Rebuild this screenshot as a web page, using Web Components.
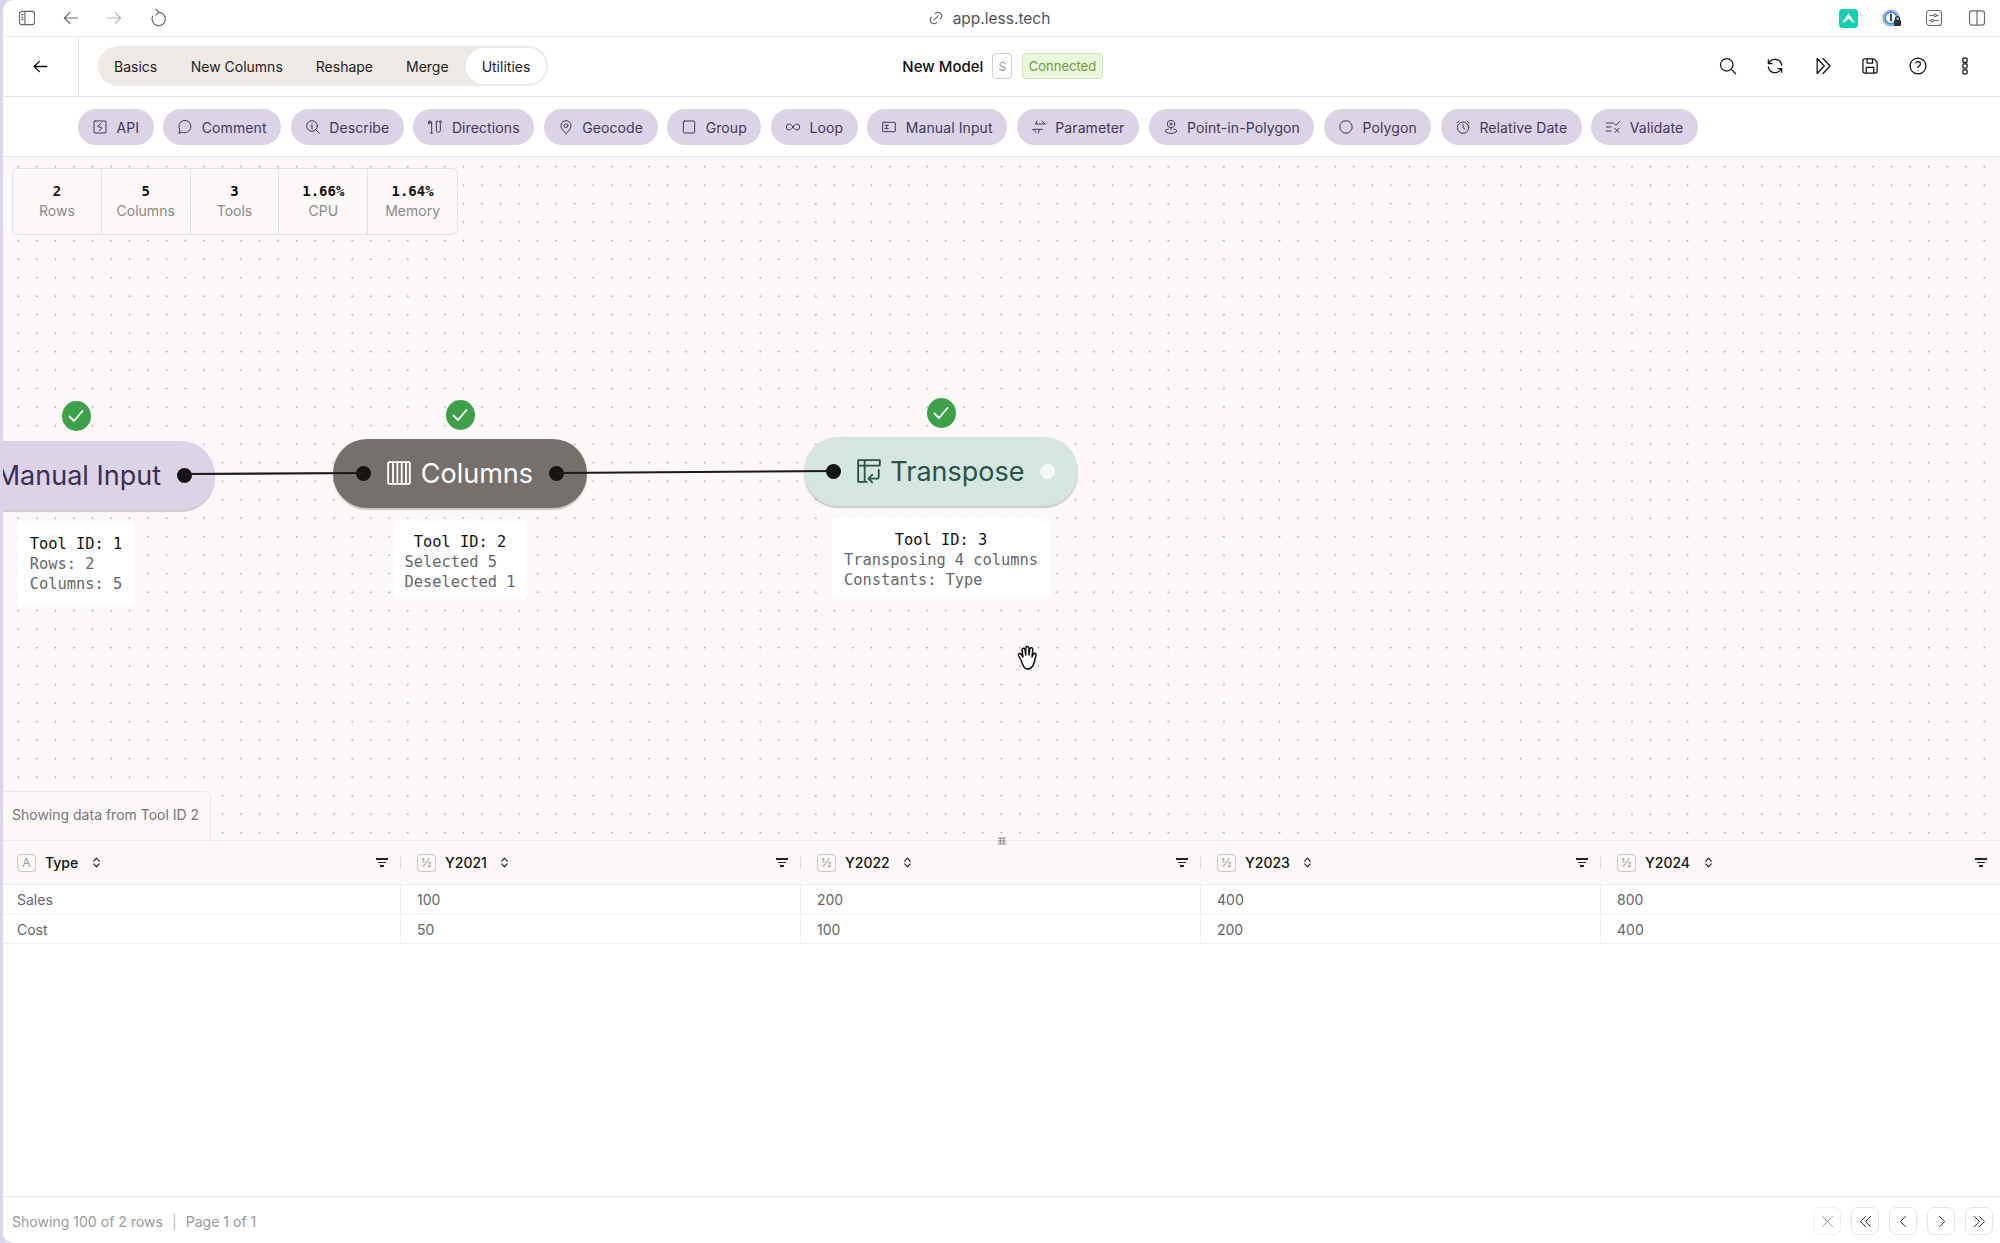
<!DOCTYPE html>
<html>
<head>
<meta charset="utf-8">
<title>New Model</title>
<style>
  html, body { margin: 0; height: 100%; background: #d9d5ea; }
  body { font-family: Inter, "Liberation Sans", sans-serif; overflow: hidden; }
  #app { display: flex; flex-direction: column; height: 1243px; margin-left: 3px; background: #fff; border-radius: 10px 0 0 10px; overflow: hidden; }
</style>
</head>
<body>
<div id="app">
  <browser-bar></browser-bar>
  <app-toolbar></app-toolbar>
  <tool-strip>
    <tool-chip icon="api">API</tool-chip>
    <tool-chip icon="comment">Comment</tool-chip>
    <tool-chip icon="describe">Describe</tool-chip>
    <tool-chip icon="directions">Directions</tool-chip>
    <tool-chip icon="geocode">Geocode</tool-chip>
    <tool-chip icon="group">Group</tool-chip>
    <tool-chip icon="loop">Loop</tool-chip>
    <tool-chip icon="manual">Manual Input</tool-chip>
    <tool-chip icon="parameter">Parameter</tool-chip>
    <tool-chip icon="pip">Point-in-Polygon</tool-chip>
    <tool-chip icon="polygon">Polygon</tool-chip>
    <tool-chip icon="alarm">Relative Date</tool-chip>
    <tool-chip icon="validate">Validate</tool-chip>
  </tool-strip>
  <flow-canvas>
    <stats-panel></stats-panel>
    <flow-node style="left:-66px;top:244px;width:278px;--pill-bg:#dbd3e6;--pill-fg:#3b2f52;--info-bottom:13px" label="Manual Input" icon="manual" out="black">
      <div>Tool ID: 1</div><div>Rows: 2</div><div>Columns: 5</div>
    </flow-node>
    <flow-node style="left:330px;top:243px;width:254px;--badge-gap:9px;--pill-bg:#75706c;--pill-fg:#fff" label="Columns" icon="columns" in="black" out="black">
      <div>Tool ID: 2</div><div>Selected 5</div><div>Deselected 1</div>
    </flow-node>
    <flow-node style="left:801px;top:241px;width:274px;--badge-gap:9px;--label-right:15.500px;--pill-bg:#d5e5df;--pill-fg:#2a5347" label="Transpose" icon="transpose" in="black" out="white">
      <div>Tool ID: 3</div><div>Transposing 4 columns</div><div>Constants: Type</div>
    </flow-node>
    <data-note>Showing data from Tool ID 2</data-note>
  </flow-canvas>
  <data-grid></data-grid>
  <grid-footer></grid-footer>
</div>

<script>
const ICONS = {
  sidebar: '<rect x="3" y="4" width="18" height="16" rx="3"/><path d="M9.5 4v16M5.5 8h1.5M5.5 11h1.5M5.5 14h1.5"/>',
  back: '<path d="M20 12H4M10.5 5.5 4 12l6.5 6.5"/>',
  forward: '<path d="M4 12h16M13.5 5.500 20 12l-6.500 6.500"/>',
  reload: '<path d="M12.500 5.200A8 8 0 1 1 5.500 10"/><path d="M9.500 1.500l3.500 3.700-3.500 3.300"/>',
  link: '<path d="M9 15l6-6M11 6l.5-.5a5 5 0 0 1 7 7l-.5.5M13 18l-.5.5a5 5 0 0 1-7-7l.5-.5"/>',
  panel: '<rect x="3" y="3.500" width="18" height="17" rx="3"/><path d="M12 3.500v17"/>',
  sliders: '<rect x="3" y="3" width="18" height="18" rx="4"/><path d="M7 9h10M7 15h10"/><circle cx="13.500" cy="9" r="1.500" fill="#fff"/><circle cx="10" cy="15" r="1.500" fill="#fff"/>',
  search: '<circle cx="10.500" cy="10.500" r="7.500"/><path d="M16 16l5 5"/>',
  refresh: '<path d="M20 11A8.100 8.100 0 0 0 4.500 9M4 4.500V9h4.500M4 13a8.100 8.100 0 0 0 15.500 2M20 19.500V15h-4.500"/>',
  run: '<path d="M5 3v18l8.500-9zM12 3l8.500 9-8.500 9"/>',
  save: '<path d="M6 3.500h10.500L20.500 7.500V18a2.500 2.500 0 0 1-2.500 2.500H6A2.500 2.500 0 0 1 3.500 18V6A2.500 2.500 0 0 1 6 3.500zM8.500 3.500V8.500h6.500V3.500M7.500 20.500V13.500h9v7"/>',
  help: '<circle cx="12" cy="12" r="9.500"/><path d="M12 17.500v.01M12 14a2 2 0 0 1 1.200-1.900 2.800 2.800 0 1 0-3.700-3.600"/>',
  dots: '<rect x="9.500" y="2.500" width="5" height="5" rx="1"/><rect x="9.500" y="9.500" width="5" height="5" rx="1"/><rect x="9.500" y="16.500" width="5" height="5" rx="1"/>',
  api: '<rect x="3" y="3" width="18" height="18" rx="1.500"/><path d="M13.500 6.500 8.500 11l6.500 2.500-4.500 4"/>',
  comment: '<path d="M3 21l1.500-4.200A9 9.300 0 1 1 8 19.800z"/>',
  describe: '<circle cx="10.500" cy="10.500" r="8"/><path d="M16.500 16.500 21.500 21.500M10.500 10v5M9 10h1.500M10.500 6.500v.01"/>',
  directions: '<path d="M7 21V7.500a2.500 2.500 0 0 0-5 0M7 7.500V5M14 3.500V17a3 3 0 0 0 6 0V5.500M14 3.500h2M5.500 21h3"/><circle cx="4" cy="4.500" r="1.800"/><circle cx="20" cy="4" r="1.500"/>',
  geocode: '<circle cx="12" cy="10" r="2.800"/><path d="M12 22s7.500-6.500 7.500-12A7.500 7.500 0 0 0 4.500 10c0 5.500 7.500 12 7.500 12z"/>',
  group: '<rect x="3.500" y="3" width="17" height="18" rx="1.500"/>',
  loop: '<path d="M12 12c-2-3-3.500-4.500-5.500-4.500a4.500 4.500 0 0 0 0 9c2 0 3.500-1.500 5.500-4.500s3.500-4.500 5.500-4.500a4.500 4.500 0 0 1 0 9c-2 0-3.500-1.500-5.500-4.500z"/>',
  manual: '<rect x="2.500" y="5" width="19" height="14" rx="1"/><path d="M6 9.500h5M6 14.500h5M8.500 9.500v5"/>',
  parameter: '<path d="M21 7.500H7M16.500 3 21 7.500M3 15.500h14M3 15.500 7.500 20M9 3 7 7.500M13 15.500 11 21"/>',
  pip: '<circle cx="12" cy="7.500" r="5.500"/><circle cx="12" cy="7.500" r="1.500"/><path d="M12 13v3M8 15c-3 .7-4.500 1.700-4.500 3 0 2 3.500 3.500 8.500 3.500s8.500-1.500 8.500-3.500c0-1.300-1.500-2.300-4.500-3"/>',
  polygon: '<path d="M8 3h8l5 6v6l-5 6H8l-5-6V9z" stroke-linejoin="round"/>',
  alarm: '<circle cx="12" cy="13" r="8.500"/><path d="M12 8v5l3 2M3 6l3-3M21 6l-3-3"/>',
  validate: '<path d="M2 6h10M2 12h7M2 18h7M14 7l2.500 2.500L22 3.500M15 14l6 6M21 14l-6 6"/>',
  columns: '<rect x="2" y="2" width="20" height="20" rx="1"/><path d="M6.500 2v20M10.500 2v20M14.500 2v20M18.500 2v20"/>',
  transpose: '<path d="M22 6V2H2v20h8M2 7h20M8 2v20"/><path d="M21 11v6a2 2 0 0 1-2 2h-7M15 15.500 11.500 19l3.500 3.500"/>',
  close: '<path d="M4 4l16 16M20 4 4 20"/>',
  first: '<path d="M12 4l-8 8 8 8M20 4l-8 8 8 8"/>',
  prev: '<path d="M15 4l-8 8 8 8"/>',
  next: '<path d="M9 4l8 8-8 8"/>',
  last: '<path d="M4 4l8 8-8 8M12 4l8 8-8 8"/>',
  sort: '<path d="M7 9.500 12 4l5 5.500M7 14.500l5 5.500 5-5.500"/>',
  grip: '<path d="M3 5h18M3 12h18M3 19h18M8 5v14M16 5v14"/>'
};

class UiIcon extends HTMLElement {
  connectedCallback() {
    const size = this.getAttribute('size') || 16;
    const sw = this.getAttribute('stroke') || 1.7;
    this.attachShadow({ mode: 'open' }).innerHTML = `
      <style>:host { display: inline-flex; flex: none; } svg { display: block; }</style>
      <svg width="${size}" height="${size}" viewBox="0 0 24 24" fill="none" stroke="currentColor" stroke-width="${sw}" stroke-linecap="round" stroke-linejoin="round">${ICONS[this.getAttribute('name')] || ''}</svg>`;
  }
}
customElements.define('ui-icon', UiIcon);

class BrowserBar extends HTMLElement {
  constructor() {
    super();
    this.attachShadow({ mode: 'open' }).innerHTML = `
      <style>
        :host { display: grid; grid-template-columns: 1fr auto 1fr; align-items: center; height: 37px; flex: none; box-sizing: border-box; border-bottom: 1px solid #eeeeee; color: #6a6a6a; }
        .left { display: flex; align-items: center; gap: 23.500px; padding-left: 14px; }
        .url { display: flex; align-items: center; gap: 8px; font-size: 15.500px; color: #555; margin-left: -26px; }
        .right { display: flex; align-items: center; justify-content: flex-end; gap: 23px; padding-right: 13px; }
        .app { width: 19px; height: 19px; border-radius: 4px; background: #10cfae; display: flex; align-items: center; justify-content: center; }
        .pass { width: 20px; height: 20px; margin-left: 1px; margin-right: -1px; }
      </style>
      <div class="left">
        <ui-icon name="sidebar" size="20" stroke="1.4"></ui-icon>
        <ui-icon name="back" size="20" stroke="1.4"></ui-icon>
        <ui-icon name="forward" size="20" stroke="1.4" style="color:#b5b5b5"></ui-icon>
        <ui-icon name="reload" size="20" stroke="1.4"></ui-icon>
      </div>
      <div class="url"><ui-icon name="link" size="18" stroke="1.4"></ui-icon>app.less.tech</div>
      <div class="right">
        <span class="app"><svg width="15" height="12" viewBox="0 0 15 12"><path d="M1 11 7.500 1 14 11l-3.500-1.500-3-3-3 3z" fill="#fff"/></svg></span>
        <svg class="pass" viewBox="0 0 20 20"><circle cx="9" cy="10" r="8" fill="none" stroke="#999" stroke-width="1.200"/><circle cx="9" cy="10" r="6" fill="none" stroke="#3d92ea" stroke-width="2"/><rect x="8" y="5.500" width="2" height="8" rx="1" fill="#444"/><rect x="12" y="12" width="7" height="6" rx="1" fill="#333"/><path d="M13.500 12v-1.500a2 2 0 0 1 4 0V12" fill="none" stroke="#333" stroke-width="1.200"/></svg>
        <ui-icon name="sliders" size="20" stroke="1.300"></ui-icon>
        <ui-icon name="panel" size="20" stroke="1.400"></ui-icon>
      </div>`;
  }
}
customElements.define('browser-bar', BrowserBar);

class AppToolbar extends HTMLElement {
  constructor() {
    super();
    const tabs = ['Basics', 'New Columns', 'Reshape', 'Merge', 'Utilities'];
    const icons = ['search', 'refresh', 'run', 'save', 'help', 'dots'];
    this.attachShadow({ mode: 'open' }).innerHTML = `
      <style>
        :host { display: grid; grid-template-columns: 1fr auto 1fr; align-items: center; height: 59.500px; flex: none; box-sizing: border-box; border-bottom: 1.500px solid #e6e3e1; color: #111; font-size: 14px; }
        .left { display: flex; align-items: center; height: 100%; }
        .back { width: 75px; height: 100%; display: flex; align-items: center; justify-content: center; border-right: 1px solid #e4e1df; flex: none; }
        .tabs { display: flex; margin-left: 19px; background: #efe9e6; border-radius: 20px; padding: 2px 2.500px 2px 0; height: 36px; align-items: stretch; }
        .tab { display: flex; align-items: center; padding: 0 16.500px; color: #222; }
        .tab:first-child { padding-left: 16px; padding-right: 17px; }
        .tab.on { background: #fff; border-radius: 18px; padding: 0 15.500px; margin-left: 1px; }
        .mid { display: flex; align-items: center; margin-left: 2px; }
        .name { font-size: 15px; font-weight: 500; color: #111; }
        .s { margin-left: 9px; width: 20px; height: 26px; box-sizing: border-box; border: 1px solid #cfcfcf; border-radius: 4px; display: flex; align-items: center; justify-content: center; font-size: 12px; color: #999; }
        .ok { margin-left: 10px; height: 26px; box-sizing: border-box; padding: 0 5.500px; border: 1px solid #cfe3b5; background: #ebf7dc; border-radius: 4px; display: flex; align-items: center; font-size: 13px; color: #6f9a3e; }
        .right { display: flex; align-items: center; justify-content: flex-end; gap: 27.400px; padding-right: 25px; }
      </style>
      <div class="left">
        <div class="back"><ui-icon name="back" size="19" stroke="1.700"></ui-icon></div>
        <div class="tabs">${tabs.map((t, i) => `<div class="tab${i === 4 ? ' on' : ''}">${t}</div>`).join('')}</div>
      </div>
      <div class="mid"><span class="name">New Model</span><span class="s">S</span><span class="ok">Connected</span></div>
      <div class="right">${icons.map(n => `<ui-icon name="${n}" size="20" stroke="1.500"></ui-icon>`).join('')}</div>`;
  }
}
customElements.define('app-toolbar', AppToolbar);

class ToolStrip extends HTMLElement {
  constructor() {
    super();
    this.attachShadow({ mode: 'open' }).innerHTML = `
      <style>
        :host { display: flex; align-items: center; gap: 9.600px; height: 60.500px; flex: none; box-sizing: border-box; padding: 1.500px 0 0 75px; border-bottom: 1.500px solid #e9e5e2; }
      </style>
      <slot></slot>`;
  }
}
customElements.define('tool-strip', ToolStrip);

class ToolChip extends HTMLElement {
  connectedCallback() {
    this.attachShadow({ mode: 'open' }).innerHTML = `
      <style>
        :host { display: inline-flex; align-items: center; gap: 8.500px; height: 36px; padding: 0 14.500px 0 14px; box-sizing: border-box; border-radius: 18px; background: #dbd3e6; color: #42385a; font-size: 14px; letter-spacing: .1px; }
      </style>
      <ui-icon name="${this.getAttribute('icon')}" size="16" stroke="1.500"></ui-icon><slot></slot>`;
  }
}
customElements.define('tool-chip', ToolChip);

class FlowCanvas extends HTMLElement {
  constructor() {
    super();
    this.attachShadow({ mode: 'open' }).innerHTML = `
      <style>
        :host { display: block; position: relative; height: 683px; flex: none; overflow: hidden; background-color: #fbf8f7;
          background-image: radial-gradient(circle, #999 0.7px, transparent 1.100px);
          background-size: 18.550px 18.500px; background-position: 6.100px 0.450px; }
        svg.wires { position: absolute; inset: 0; width: 100%; height: 100%; z-index: 2; pointer-events: none; }
        .hand { position: absolute; left: 1012px; top: 488px; z-index: 3; }
      </style>
      <slot></slot>
      <svg class="wires" fill="none" stroke="#1a1a1a" stroke-width="2.200">
        <path d="M181.500 317 360.500 316"/>
        <path d="M553.500 316 831 314"/>
      </svg>
      <svg class="hand" width="24" height="26" viewBox="0 0 24 26" fill="#fff" stroke="#111" stroke-width="1.500" stroke-linecap="round" stroke-linejoin="round">
        <path d="M6 15 3.500 10.500a1.500 1.500 0 0 1 2.500-1.500l2 3-1-7a1.500 1.500 0 0 1 3-.3l.8 5.300V3a1.500 1.500 0 0 1 3 0l.2 7 .8-6a1.500 1.500 0 0 1 3 .3L17 12l1.500-3a1.400 1.400 0 0 1 2.500 1.200L19 18c-1 4-3 6-7 6-3.500 0-4.500-5-6-9z"/>
      </svg>`;
  }
}
customElements.define('flow-canvas', FlowCanvas);

class StatsPanel extends HTMLElement {
  constructor() {
    super();
    const stats = [['2', 'Rows'], ['5', 'Columns'], ['3', 'Tools'], ['1.66%', 'CPU'], ['1.64%', 'Memory']];
    this.attachShadow({ mode: 'open' }).innerHTML = `
      <style>
        :host { position: absolute; left: 9px; top: 11px; display: flex; background: #fbf8f7; border: 1px solid #e2dfdc; border-radius: 6px; height: 67px; box-sizing: border-box; z-index: 1; }
        .cell { width: 88.800px; display: flex; flex-direction: column; align-items: center; justify-content: center; gap: 3px; padding-bottom: 2px; border-right: 1px solid #e2dfdc; box-sizing: border-box; }
        .cell:last-child { border-right: 0; }
        b { font: 700 14px "DejaVu Sans Mono", monospace; color: #111; }
        span { font-size: 14px; color: #8a8a8a; }
      </style>
      ${stats.map(s => `<div class="cell"><b>${s[0]}</b><span>${s[1]}</span></div>`).join('')}`;
  }
}
customElements.define('stats-panel', StatsPanel);

class FlowNode extends HTMLElement {
  connectedCallback() {
    const port = (v, cls) => v ? `<span class="port ${v} ${cls}"></span>` : '';
    this.attachShadow({ mode: 'open' }).innerHTML = `
      <style>
        :host { position: absolute; display: flex; flex-direction: column; align-items: center; z-index: 1; }
        .ok { width: 29px; height: 30px; border-radius: 50%; background: #3ea04a; display: flex; align-items: center; justify-content: center; margin-bottom: var(--badge-gap, 10px); }
        .pill { width: 100%; height: 68.500px; box-sizing: border-box; border-radius: 34px; background: var(--pill-bg); color: var(--pill-fg); display: flex; align-items: center; justify-content: flex-end; padding: 0 23px; box-shadow: 0 2px 1px rgba(90, 80, 80, .28); font-size: 27px; white-space: nowrap; }
        .port { width: 15px; height: 15px; border-radius: 50%; flex: none; position: relative; z-index: 3; }
        .port.black { background: #141414; }
        .port.white { background: #f4f7f5; }
        .port.in { margin-right: 14.900px; }
        .label { margin-left: 8.800px; margin-right: var(--label-right, 16px); }
        .info { margin-top: 11px; background: #fff; border-radius: 4px; padding: 14px 12px var(--info-bottom, 7px); font: 15.350px/19.500px "DejaVu Sans Mono", monospace; color: #666; white-space: nowrap; }
        ::slotted(div:first-child) { color: #111; text-align: center; margin-bottom: 1px; }
      </style>
      <div class="ok"><svg width="16" height="14" viewBox="0 0 16 14" fill="none" stroke="#fff" stroke-width="1.800" stroke-linecap="round" stroke-linejoin="round"><path d="M1.500 7.500 6 12 14.500 2"/></svg></div>
      <div class="pill">
        ${port(this.getAttribute('in'), 'in')}
        <ui-icon name="${this.getAttribute('icon')}" size="26" stroke="1.700"></ui-icon>
        <span class="label">${this.getAttribute('label')}</span>
        ${port(this.getAttribute('out'), 'out')}
      </div>
      <div class="info"><slot></slot></div>`;
  }
}
customElements.define('flow-node', FlowNode);

class DataNote extends HTMLElement {
  constructor() {
    super();
    this.attachShadow({ mode: 'open' }).innerHTML = `
      <style>
        :host { position: absolute; left: 0; bottom: 0; height: 49px; width: 208px; box-sizing: border-box; display: flex; align-items: center; padding: 0 0 3px 9px; background: #fbf8f7; border: 1px solid #ebe7e4; border-width: 1px 1px 0 0; border-radius: 0 6px 0 0; font-size: 14px; color: #777; z-index: 1; }
      </style>
      <slot></slot>`;
  }
}
customElements.define('data-note', DataNote);

class DataGrid extends HTMLElement {
  constructor() {
    super();
    const head = [['Type', 'A'], ['Y2021', '½'], ['Y2022', '½'], ['Y2023', '½'], ['Y2024', '½']];
    const rows = [['Sales', '100', '200', '400', '800'], ['Cost', '50', '100', '200', '400']];
    this.attachShadow({ mode: 'open' }).innerHTML = `
      <style>
        :host { display: grid; position: relative; grid-template-columns: 398px 400px 400px 400px 1fr; grid-auto-rows: min-content; flex: 1; align-content: start; font-size: 14px; }
        .h { height: 45px; box-sizing: border-box; background: #fbf8f7; border-top: 1.500px solid #efebe8; border-bottom: 1.500px solid #eeeae7; display: flex; align-items: center; padding: 0 13px 0 16px; position: relative; color: #111; font-weight: 450; }
        .h.first { padding-left: 14px; }
        .h:not(.end)::after { content: ""; position: absolute; right: 0; top: 14px; height: 14px; width: 1px; background: #dedbd8; }
        .t { width: 19px; height: 18px; box-sizing: border-box; border: 1px solid #c9c6c4; border-radius: 4px; display: flex; align-items: center; justify-content: center; font-size: 12px; font-weight: 400; color: #999; margin-right: 9px; }
        .sort { margin-left: 11.500px; color: #222; }
        .f { margin-left: auto; display: flex; flex-direction: column; align-items: center; gap: 2px; }
        .f i { display: block; height: 1.500px; background: #222; }
        .c { height: 29.500px; box-sizing: border-box; display: flex; align-items: center; padding: 1px 0 0 16px; color: #666; border-bottom: 1px solid #eeeeee; border-right: 1px solid #f0f0f0; }
        .c.first { padding-left: 14px; }
        .c.end { border-right: 0; }
        .grip { position: absolute; left: 994px; top: -4px; color: #777; }
      </style>
      ${head.map((h, i) => `<div class="h${i === 0 ? ' first' : ''}${i === 4 ? ' end' : ''}"><span class="t">${h[1]}</span>${h[0]}<ui-icon class="sort" name="sort" size="13" stroke="2.200"></ui-icon>
        <span class="f"><i style="width:12px"></i><i style="width:8px"></i><i style="width:4px"></i></span></div>`).join('')}
      ${rows.map(r => r.map((v, i) => `<div class="c${i === 0 ? ' first' : ''}${i === 4 ? ' end' : ''}">${v}</div>`).join('')).join('')}
      <ui-icon class="grip" name="grip" size="10" stroke="2"></ui-icon>`;
  }
}
customElements.define('data-grid', DataGrid);

class GridFooter extends HTMLElement {
  constructor() {
    super();
    const btns = ['close', 'first', 'prev', 'next', 'last'];
    this.attachShadow({ mode: 'open' }).innerHTML = `
      <style>
        :host { display: flex; align-items: center; height: 47px; flex: none; box-sizing: border-box; border-top: 1px solid #e8e8e8; padding: 2px 7px 0 9px; font-size: 14px; color: #999; letter-spacing: .03px; }
        .sep { margin: 0 9px; color: #bbb; }
        .btns { margin-left: auto; display: flex; gap: 10px; }
        .b { width: 28px; height: 28px; box-sizing: border-box; border: 1.500px solid #e8e4e1; border-radius: 7px; display: flex; align-items: center; justify-content: center; color: #222; }
        .b.off { color: #999; border-color: #f2f0ef; }
      </style>
      <span>Showing 100 of 2 rows</span><span class="sep">|</span><span>Page 1 of 1</span>
      <div class="btns">${btns.map((n, i) => `<div class="b${i ? '' : ' off'}"><ui-icon name="${n}" size="15" stroke="1.500"></ui-icon></div>`).join('')}</div>`;
  }
}
customElements.define('grid-footer', GridFooter);
</script>
</body>
</html>
